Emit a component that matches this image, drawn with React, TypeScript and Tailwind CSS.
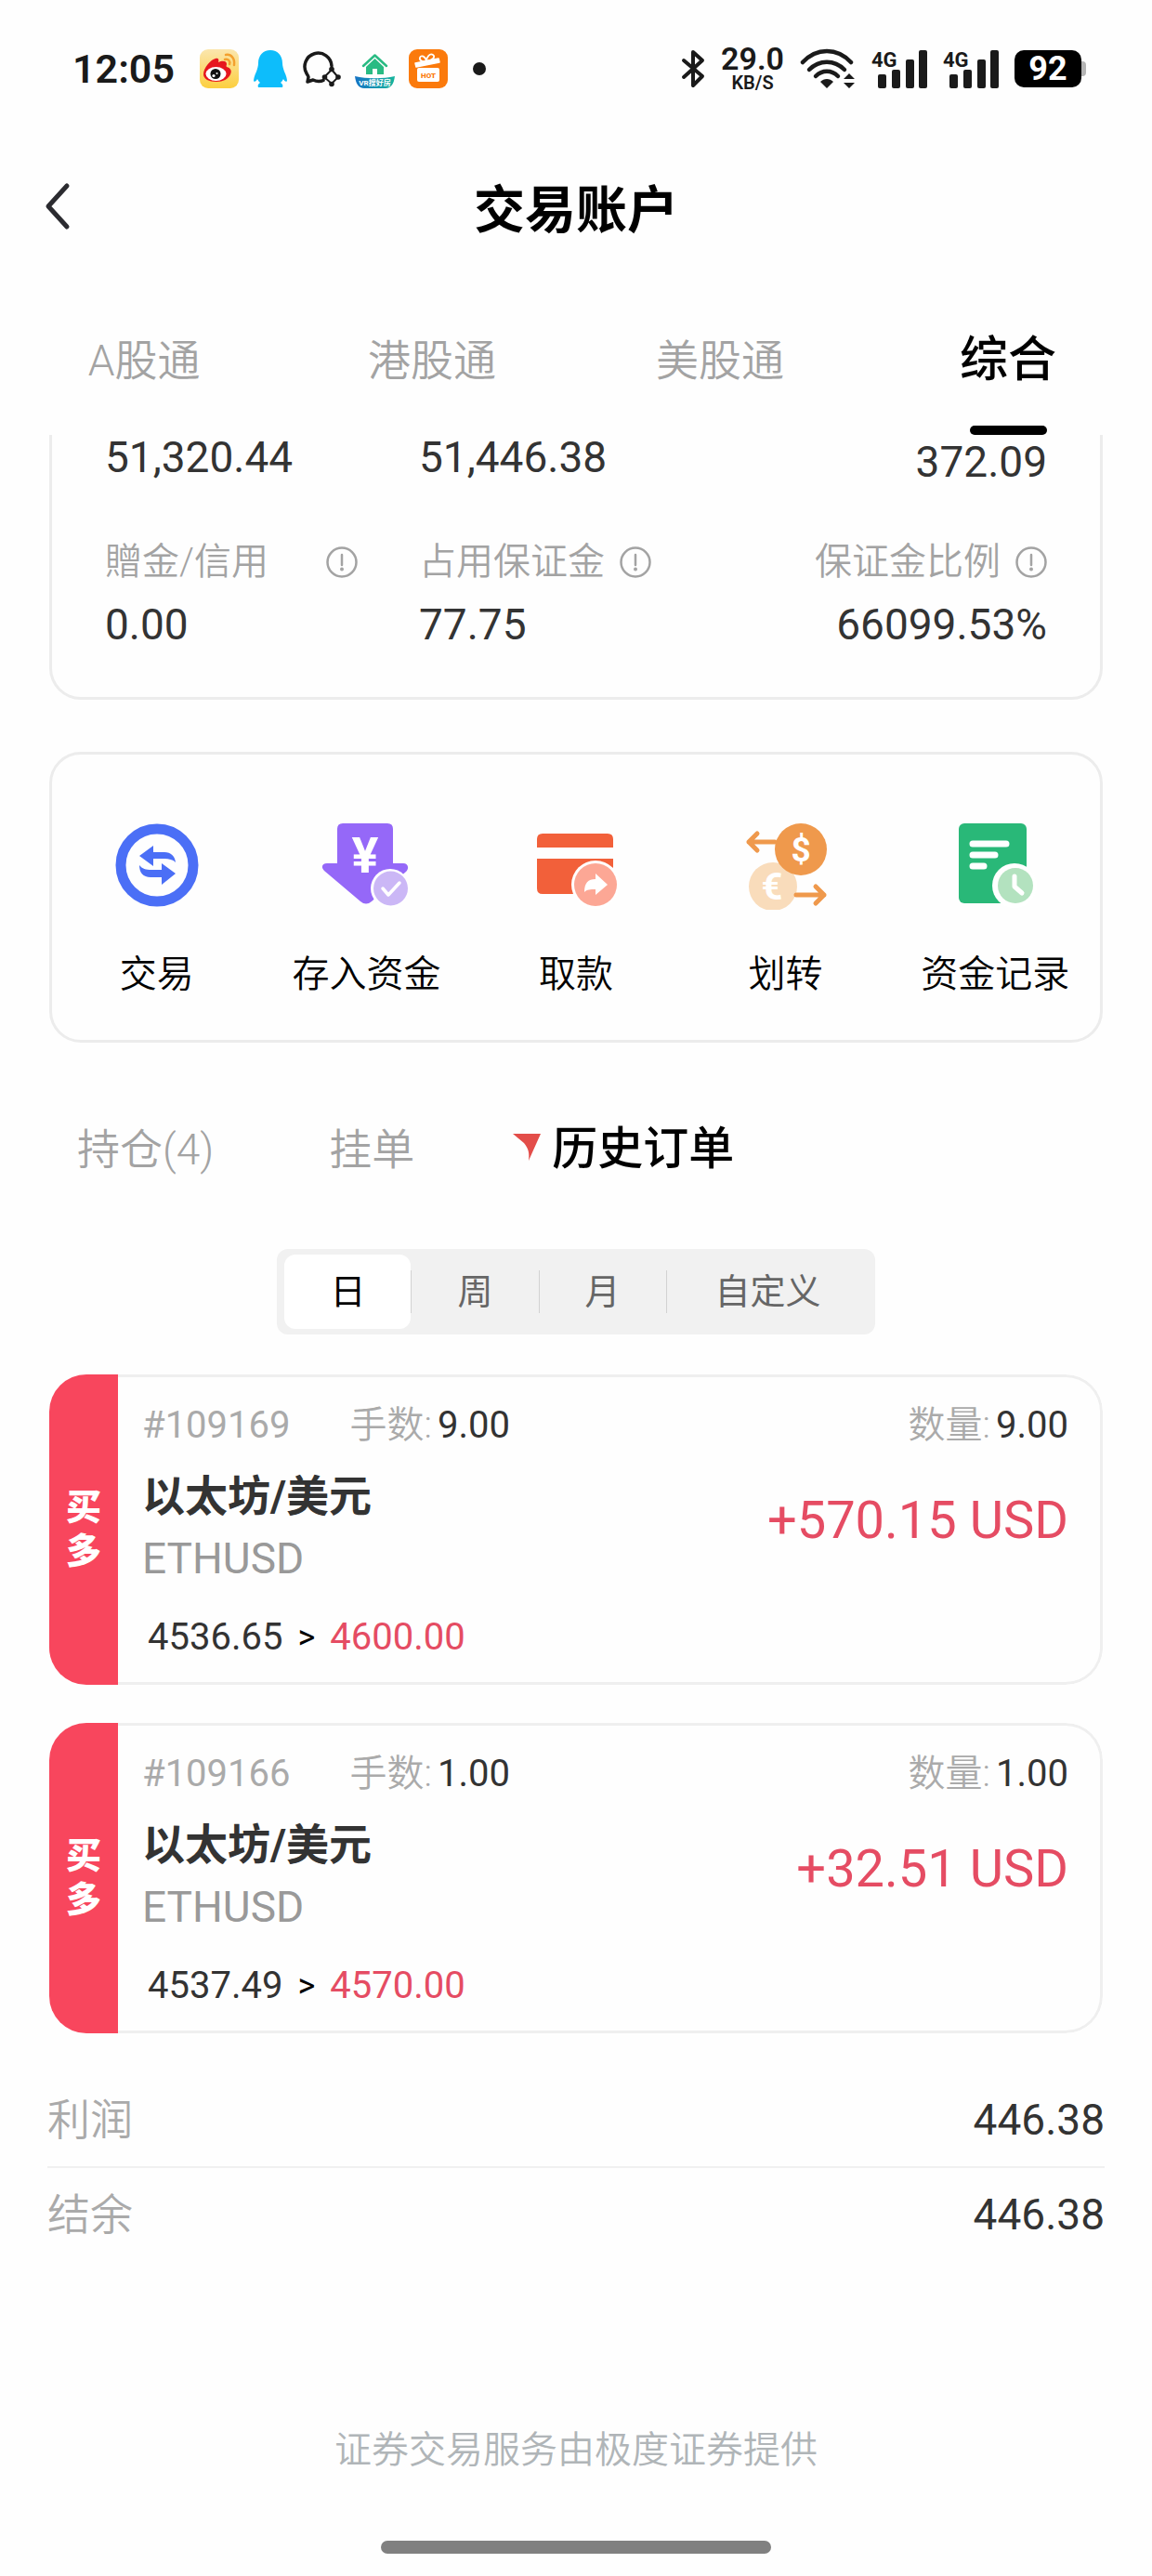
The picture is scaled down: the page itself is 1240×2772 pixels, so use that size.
import { useState } from "react"

const accountTabs = ["A股通", "港股通", "美股通", "综合"]
const orderTabs = ["持仓(4)", "挂单", "历史订单"]
const periods = ["日", "周", "月", "自定义"]

const orders = [
  {
    id: "109169",
    lots: "9.00",
    amount: "9.00",
    name: "以太坊/美元",
    symbol: "ETHUSD",
    open: "4536.65",
    close: "4600.00",
    profit: "+570.15 USD",
  },
  {
    id: "109166",
    lots: "1.00",
    amount: "1.00",
    name: "以太坊/美元",
    symbol: "ETHUSD",
    open: "4537.49",
    close: "4570.00",
    profit: "+32.51 USD",
  },
]

const summary = [
  { label: "利润", value: "446.38" },
  { label: "结余", value: "446.38" },
]

const WeiboIcon = () => (
  <svg viewBox="0 0 42 42" className="size-[42px]">
    <defs>
      <linearGradient id="weibo" x1="0" y1="0" x2="0" y2="1">
        <stop offset="0" stopColor="#fbe6ae" />
        <stop offset="1" stopColor="#fccf3f" />
      </linearGradient>
    </defs>
    <rect width="42" height="42" rx="9" fill="url(#weibo)" />
    <path
      d="M4 27C4 20 12 11 17 10c3-1 4 1 3 4 4-2 9-2 9 2 0 1-1 2 0 3 4 1 6 4 4 8-2 5-8 8-15 8C10 35 4 32 4 27Z"
      fill="#e6161e"
    />
    <ellipse cx="17.500" cy="26.500" rx="11" ry="7.500" fill="#fff" />
    <circle cx="17" cy="26.500" r="5.500" fill="#111" />
    <circle cx="15" cy="28.500" r="1.600" fill="#fff" />
    <circle cx="18.500" cy="26" r="1" fill="#fff" />
    <path d="M28 6c6-1 10 4 9 11M27 11c4-1 6 2 5 5" fill="none" stroke="#f3a02e" strokeWidth="2.500" strokeLinecap="round" />
  </svg>
)

const QQIcon = () => (
  <svg viewBox="0 0 38 42" className="h-[42px] w-[38px]">
    <path
      d="M19 1c8 0 13 6 13 14 0 3 1 6 2 9 2 4 3 8 3 10-1 2-3 0-4-2-1 2-2 3-3 4 2 1 3 3 2 5H6c-1-2 0-4 2-5-1-1-2-2-3-4-1 2-3 4-4 2 0-2 1-6 3-10 1-3 2-6 2-9C6 7 11 1 19 1Z"
      fill="#0dbdfb"
    />
  </svg>
)

const ChatIcon = () => (
  <svg viewBox="0 0 42 42" className="size-[42px]">
    <path
      d="M32 18A14.500 14.500 0 1 0 5 26c1 2 2 3 2 4l-1 5 6-2c2 1 4 1.500 6 1.500 2 0 4-.5 5-1"
      fill="none"
      stroke="#1a1a1a"
      strokeWidth="3.500"
      strokeLinecap="round"
      strokeLinejoin="round"
    />
    <path d="m32 22 7 8-7 7-8-7Z" fill="none" stroke="#1a1a1a" strokeWidth="2" />
    <g fill="#1a1a1a">
      <circle cx="32" cy="21.500" r="2.800" />
      <circle cx="39" cy="30" r="2.800" />
      <circle cx="32" cy="37.500" r="2.800" />
      <circle cx="24.500" cy="30" r="2.800" />
    </g>
  </svg>
)

const HouseIcon = () => (
  <svg viewBox="0 0 43 42" className="h-[42px] w-[43px]">
    <defs>
      <linearGradient id="house" x1="0" y1="0" x2="1" y2="0">
        <stop offset="0" stopColor="#1673c5" />
        <stop offset="1" stopColor="#16b59c" />
      </linearGradient>
    </defs>
    <path d="M9 18 21.500 6.500 34 18" fill="none" stroke="#29bb83" strokeWidth="2.500" strokeLinecap="round" strokeLinejoin="round" />
    <path d="m21.500 10 9.500 9v8h-7v-6h-5v6h-7v-8Z" fill="#29bb83" />
    <path d="M0 29c13 3 30 3 43 0-1 8-4 13-10 13H10C4 42 1 37 0 29Z" fill="url(#house)" />
    <text x="21.500" y="39" fontSize="8" fontWeight="700" fill="#fff" textAnchor="middle">
      VR搜好房
    </text>
  </svg>
)

const GiftIcon = () => (
  <svg viewBox="0 0 42 42" className="size-[42px]">
    <rect width="42" height="42" rx="9" fill="#fb7a0c" />
    <path d="M19 13c-4 1-8-1-7-4s6-2 7 4Zm0 0c0-5 4-9 7-7s0 6-7 7Z" fill="none" stroke="#fff" strokeWidth="1.800" />
    <path d="m7 15 25-5 1 4-25 5Z" fill="#fff" stroke="#fff" strokeWidth="1.500" strokeLinejoin="round" />
    <rect x="9" y="20" width="24" height="15" rx="2" fill="#fff" />
    <text x="21" y="31" fontSize="8" fontWeight="900" fill="#fb7a0c" textAnchor="middle">
      HOT
    </text>
  </svg>
)

const BluetoothIcon = () => (
  <svg viewBox="0 0 26 44" className="h-[44px] w-[26px]">
    <path
      d="m3 13 20 17-10 10V4l10 9L3 31"
      fill="none"
      stroke="#1a1a1a"
      strokeWidth="4"
      strokeLinecap="round"
      strokeLinejoin="round"
    />
  </svg>
)

const WifiIcon = () => (
  <svg viewBox="0 0 60 44" className="h-[44px] w-[60px]">
    <g fill="none" stroke="#1a1a1a" strokeWidth="4.500" strokeLinecap="round">
      <path d="M3 15C18-1 40-1 55 15" />
      <path d="M10 23c11-11 27-11 38 0" />
      <path d="M17 30c7-7 17-7 24 0" />
    </g>
    <path d="M22 36c4-4 10-4 14 0l-7 7Z" fill="#1a1a1a" />
    <path d="m53 27 6 6H47Zm0 16-6-6h12Z" fill="#1a1a1a" />
  </svg>
)

const SignalIcon = () => (
  <svg viewBox="0 0 60 44" className="h-[44px] w-[60px] overflow-visible">
    <g fill="#1a1a1a">
      <rect x="7" y="28" width="9" height="15" rx="2" />
      <rect x="22" y="23" width="9" height="20" rx="2" />
      <rect x="37" y="12" width="9" height="31" rx="2" />
      <rect x="51" y="2" width="9" height="41" rx="2" />
    </g>
    <text x="0" y="20" fontSize="22" fontWeight="700" fill="#1a1a1a">
      4G
    </text>
  </svg>
)

const InfoIcon = () => (
  <svg viewBox="0 0 34 34" className="size-[34px] shrink-0">
    <circle cx="17" cy="17" r="15.500" fill="none" stroke="#a3a3a3" strokeWidth="2.500" />
    <path d="M17 9v11" stroke="#a3a3a3" strokeWidth="2.500" strokeLinecap="round" />
    <circle cx="17" cy="24.500" r="2" fill="#a3a3a3" />
  </svg>
)

const TradeIcon = () => (
  <svg viewBox="0 0 96 96" className="size-24">
    <circle cx="48" cy="48" r="39" fill="none" stroke="#4b6ff6" strokeWidth="11" />
    <g fill="#4b6ff6">
      <path d="M29 38 44 27v7h12c7 0 11 4 12 11-3-3-7-4-12-4H44v8Z" />
      <path d="M68 57 53 46v7H42c-6 0-10-1-13-5 0 8 4 13 12 13h12v8Z" />
    </g>
  </svg>
)

const DepositIcon = () => (
  <svg viewBox="0 0 96 96" className="size-24">
    <path
      d="M23 3h48q6 0 6 6v37h11c5 0 7 5 3 9L54 87q-6 5-12 0L3 54c-4-4-2-8 3-8h11V9q0-6 6-6Z"
      fill="#9568f8"
    />
    <text x="47" y="56" fontSize="54" fontWeight="700" fill="#fff" textAnchor="middle">
      ¥
    </text>
    <circle cx="74" cy="73" r="21" fill="#fff" />
    <circle cx="74.500" cy="73" r="18.500" fill="#cbb7f6" />
    <path d="m66 73 6 7 12-13" fill="none" stroke="#fff" strokeWidth="3.500" strokeLinecap="round" strokeLinejoin="round" />
  </svg>
)

const WithdrawIcon = () => (
  <svg viewBox="0 0 96 96" className="size-24">
    <path d="M12 14h70q6 0 6 6v9H6v-9q0-6 6-6ZM6 41h82v38H12q-6 0-6-6Z" fill="#f2603a" />
    <circle cx="69" cy="69" r="26" fill="#fff" />
    <circle cx="69" cy="69" r="23" fill="#fca795" />
    <path d="M57 77c0-10 4-14 12-14v-6l13 12-13 11v-6c-6 0-9 0-12 3Z" fill="#fff" />
  </svg>
)

const TransferIcon = () => (
  <svg viewBox="0 0 96 96" className="size-24">
    <circle cx="34" cy="71" r="26" fill="#f9dcbb" />
    <circle cx="64" cy="31" r="28" fill="#ef994c" />
    <g fill="none" stroke="#ef994c" strokeWidth="5" strokeLinecap="round" strokeLinejoin="round">
      <path d="M36 23H8m9-9-9 9 9 9" />
      <path d="M59 80h30m-9-9 9 9-9 9" />
    </g>
    <text x="64" y="44" fontSize="37" fontWeight="700" fill="#fff" textAnchor="middle">
      $
    </text>
    <text x="33" y="85" fontSize="40" fontWeight="700" fill="#fff" textAnchor="middle">
      €
    </text>
  </svg>
)

const RecordIcon = () => (
  <svg viewBox="0 0 96 96" className="size-24">
    <rect x="9" y="3" width="73" height="86" rx="6" fill="#29b878" />
    <g stroke="#fff" strokeWidth="7" strokeLinecap="round">
      <path d="M24 25h36M24 37h24M24 49h12" />
    </g>
    <circle cx="69" cy="70" r="24" fill="#fff" />
    <circle cx="70" cy="70" r="19" fill="#b3e2bf" />
    <path d="M69 60v11l8 7" fill="none" stroke="#fff" strokeWidth="5" strokeLinecap="round" strokeLinejoin="round" />
  </svg>
)

const actions = [
  { name: "交易", icon: TradeIcon },
  { name: "存入资金", icon: DepositIcon },
  { name: "取款", icon: WithdrawIcon },
  { name: "划转", icon: TransferIcon },
  { name: "资金记录", icon: RecordIcon },
]

const StatusBar = () => (
  <div className="flex h-[148px] items-center justify-between pr-[71px] pl-[78px] text-[#1a1a1a]">
    <div className="flex items-center gap-[15px]">
      <span className="mr-3 text-[43px] leading-[48px] font-semibold">12:05</span>
      <WeiboIcon />
      <QQIcon />
      <ChatIcon />
      <HouseIcon />
      <GiftIcon />
      <span className="ml-3 size-[14px] rounded-full bg-[#1a1a1a]" />
    </div>
    <div className="flex items-center gap-[17px]">
      <BluetoothIcon />
      <div className="flex flex-col items-center font-semibold">
        <span className="text-[34px] leading-[30px]">29.0</span>
        <span className="text-[20px] leading-[22px]">KB/S</span>
      </div>
      <WifiIcon />
      <SignalIcon />
      <SignalIcon />
      <div className="flex items-center">
        <span className="w-[72px] rounded-[10px] bg-black text-center text-[36px] leading-[40px] font-bold text-white">92</span>
        <span className="h-4 w-[5px] rounded-r bg-[#b5b5b5]" />
      </div>
    </div>
  </div>
)

const Metrics = () => (
  <section className="rounded-b-[34px] border-x-[3px] border-b-[3px] border-[#ececec] px-[57px] pb-[50px] text-[46px] text-[#333]">
    <div className="grid grid-cols-3">
      <p className="leading-[48px]">51,320.44</p>
      <p className="leading-[48px]">51,446.38</p>
      <p className="text-right leading-[58px]">372.09</p>
    </div>
    <dl className="mt-[51px] grid grid-cols-3 leading-[56px]">
      <div className="flex flex-col gap-[11px]">
        <dt className="flex items-center gap-[18px] text-[40px] font-[350] text-[#a3a3a3]">
          <span className="w-[220px]">贈金/信用</span>
          <InfoIcon />
        </dt>
        <dd>0.00</dd>
      </div>
      <div className="flex flex-col gap-[11px]">
        <dt className="flex items-center gap-4 text-[40px] font-[350] text-[#a3a3a3]">
          占用保证金
          <InfoIcon />
        </dt>
        <dd>77.75</dd>
      </div>
      <div className="flex flex-col items-end gap-[11px]">
        <dt className="flex items-center gap-4 text-[40px] font-[350] text-[#a3a3a3]">
          保证金比例
          <InfoIcon />
        </dt>
        <dd>66099.53%</dd>
      </div>
    </dl>
  </section>
)

const OrderCard = ({ order }: { order: (typeof orders)[number] }) => (
  <li className="flex overflow-hidden rounded-[40px]">
    <div className="flex w-[74px] shrink-0 items-center justify-center bg-[#f8465d]">
      <span className="w-[38px] text-[38px] leading-[47px] font-black text-white">买多</span>
    </div>
    <div className="flex-1 rounded-r-[40px] border-y-[3px] border-r-[3px] border-[#efefef] pt-7 pr-[34px] pb-6 pl-[26px] text-[40px] text-[#333]">
      <div className="flex leading-[48px]">
        <span className="text-[#aaa]">#{order.id}</span>
        <span className="ml-16 font-[350] text-[#aaa]">手数:</span>
        <span className="ml-1.5">{order.lots}</span>
        <span className="ml-auto font-[350] text-[#aaa]">数量:</span>
        <span className="ml-1.5">{order.amount}</span>
      </div>
      <div className="mt-[22px] flex justify-between">
        <div>
          <h2 className="text-[46px] leading-[60px] font-bold">{order.name}</h2>
          <p className="mt-2 text-[46px] leading-[58px] text-[#999]">{order.symbol}</p>
        </div>
        <p className="text-[56px] leading-[112px] text-[#e54c63]">{order.profit}</p>
      </div>
      <p className="mt-8 flex pl-1.5 leading-[48px]">
        {order.open}
        <span className="mx-4 text-[36px] text-black">&gt;</span>
        <span className="text-[#e54c63]">{order.close}</span>
      </p>
    </div>
  </li>
)

const App = () => {
  const [account, setAccount] = useState("综合")
  const [tab, setTab] = useState("历史订单")
  const [period, setPeriod] = useState("日")

  return (
    <div lang="zh-CN" className="w-full bg-[#fefefe] [font-family:Roboto,'Noto_Sans_CJK_SC',sans-serif]">
      <StatusBar />

      <header className="grid h-[152px] grid-cols-[100px_1fr_100px] items-center">
        <button aria-label="返回" className="pl-[46px]">
          <svg viewBox="0 0 34 56" className="h-[56px] w-[34px]">
            <path d="M26 4 6 26l20 22" fill="none" stroke="#2b2b30" strokeWidth="5" strokeLinecap="round" strokeLinejoin="round" />
          </svg>
        </button>
        <h1 className="pt-1 text-center text-[55px] leading-[64px] font-bold text-black">交易账户</h1>
      </header>

      <nav className="grid h-[168px] grid-cols-4">
        {accountTabs.map((name) => (
          <button
            key={name}
            onClick={() => setAccount(name)}
            className={
              account === name
                ? "flex flex-col items-center justify-between pt-[54px] text-[52px] leading-[68px] font-medium text-black"
                : "flex flex-col items-center justify-between pt-[54px] text-[46px] leading-[68px] font-[350] text-[#a3a3a3]"
            }
          >
            {name}
            {account === name && <span className="h-[10px] w-[83px] rounded-full bg-black" />}
          </button>
        ))}
      </nav>

      <main className="px-[53px]">
        <Metrics />

        <section className="mt-14 grid grid-cols-5 rounded-[34px] border-[3px] border-[#ececec] pt-[71px] pb-[42px]">
          {actions.map((action) => (
            <button key={action.name} className="flex flex-col items-center gap-[42px] text-[40px] leading-[56px] font-[350] whitespace-nowrap text-black">
              <action.icon />
              {action.name}
            </button>
          ))}
        </section>

        <nav className="mt-[85px] flex items-center pl-[30px] leading-[60px]">
          {orderTabs.map((name) => (
            <button
              key={name}
              onClick={() => setTab(name)}
              className={
                tab === name
                  ? "flex items-start gap-3 text-[49px] font-medium text-black"
                  : "mr-[106px] text-[46px] font-[350] text-[#a3a3a3] first:mr-[124px]"
              }
            >
              {tab === name && (
                <svg viewBox="0 0 30 30" className="mt-[12px] size-[30px]">
                  <path d="M0 1h30L17 30c1-8 0-13-5-19Z" fill="#e34d49" />
                </svg>
              )}
              {name}
            </button>
          ))}
        </nav>

        <div className="mx-auto mt-[77px] flex h-[92px] w-fit items-center rounded-xl bg-[#f1f1f1] py-1.5 pr-1.5 pl-2 text-[38px]">
          {periods.map((name, i) => (
            <div key={name} className="flex h-full items-center">
              {i > 0 && <span className="h-[46px] w-px bg-[#d2d2d2]" />}
              <button
                onClick={() => setPeriod(name)}
                className={
                  period === name
                    ? "h-full rounded-xl bg-white px-[49px] text-black"
                    : i === periods.length - 1
                      ? "h-full px-[52px] text-[#666]"
                      : "h-full px-[49px] text-[#666]"
                }
              >
                {name}
              </button>
            </div>
          ))}
        </div>

        <ul className="mt-[43px] flex flex-col gap-[41px]">
          {orders.map((order) => (
            <OrderCard key={order.id} order={order} />
          ))}
        </ul>

        <dl className="-mx-0.5 mt-11 text-[46px]">
          {summary.map((row) => (
            <div key={row.label} className="flex h-[101px] items-center justify-between border-b-2 border-[#f0f0f0] last:border-b-0">
              <dt className="font-[350] text-[#aaa]">{row.label}</dt>
              <dd className="text-[#333]">{row.value}</dd>
            </div>
          ))}
        </dl>
      </main>

      <footer className="mt-[175px] flex flex-col items-center pb-6">
        <p className="text-[40px] leading-[56px] font-[350] text-[#b0b5b8]">证券交易服务由极度证券提供</p>
        <span className="mt-[69px] h-[14px] w-[420px] rounded-full bg-[#808080]" />
      </footer>
    </div>
  )
}

export default App
